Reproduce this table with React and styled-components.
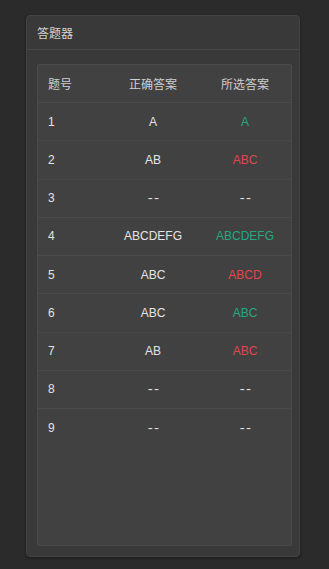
import React from "react";
import styled, { createGlobalStyle } from "styled-components";

const Global = createGlobalStyle`
  html, body { margin: 0; padding: 0; background: #2b2b2b; }
  body { font-family: "Liberation Sans", "Noto Sans CJK SC", sans-serif; }
  * { box-sizing: border-box; }
`;

const Page = styled.div`
  width: 329px;
  height: 569px;
  padding: 15px 29px 12px 26px;
  background: #2b2b2b;
`;

const Card = styled.div`
  width: 274px;
  height: 542px;
  background: #393939;
  border: 1px solid #444444;
  border-radius: 4px;
  box-shadow: 0 1px 3px rgba(0, 0, 0, 0.45);
  display: flex;
  flex-direction: column;
`;

const CardHeader = styled.div`
  height: 34px;
  padding: 0 10px;
  display: flex;
  align-items: center;
  border-bottom: 1px solid #474747;
  color: #d4d4d4;
  font-size: 12px;
  flex-shrink: 0;
`;

const CardBody = styled.div`
  flex: 1;
  padding: 14px 9px 10px 10px;
  display: flex;
`;

const TableBox = styled.div`
  flex: 1;
  background: #414141;
  border: 1px solid #4a4a4a;
  border-radius: 2px;
`;

const Row = styled.div`
  display: grid;
  grid-template-columns: 69px 92px 92px;
  height: ${(p) => (p.$head ? "38px" : "38.25px")};
  align-items: center;
  border-bottom: ${(p) => (p.$last ? "none" : "1px solid #4a4a4a")};
  font-size: 12px;
`;

const Cell = styled.div`
  padding-left: ${(p) => (p.$first ? "10px" : "0")};
  text-align: ${(p) => (p.$first ? "left" : "center")};
  color: ${(p) =>
    p.$tone === "ok" ? "#22aa80" : p.$tone === "bad" ? "#e0474c" : p.$head ? "#cfcfcf" : "#e4e4e4"};
  white-space: nowrap;
`;

const Dash = styled.span`
  display: inline-block;
  letter-spacing: 1px;
  margin-right: -1px;
  transform: scaleX(1.25);
`;

const data = [
  ["1", "A", "A", "ok"],
  ["2", "AB", "ABC", "bad"],
  ["3", "--", "--", ""],
  ["4", "ABCDEFG", "ABCDEFG", "ok"],
  ["5", "ABC", "ABCD", "bad"],
  ["6", "ABC", "ABC", "ok"],
  ["7", "AB", "ABC", "bad"],
  ["8", "--", "--", ""],
  ["9", "--", "--", ""],
];

const show = (v) => (v === "--" ? <Dash>--</Dash> : v);

export default function App() {
  return (
    <>
      <Global />
      <Page>
        <Card>
          <CardHeader>答题器</CardHeader>
          <CardBody>
            <TableBox>
              <Row $head>
                <Cell $first $head>题号</Cell>
                <Cell $head>正确答案</Cell>
                <Cell $head>所选答案</Cell>
              </Row>
              {data.map(([n, c, s, t], i) => (
                <Row key={n} $last={i === data.length - 1}>
                  <Cell $first>{n}</Cell>
                  <Cell>{show(c)}</Cell>
                  <Cell $tone={t}>{show(s)}</Cell>
                </Row>
              ))}
            </TableBox>
          </CardBody>
        </Card>
      </Page>
    </>
  );
}
